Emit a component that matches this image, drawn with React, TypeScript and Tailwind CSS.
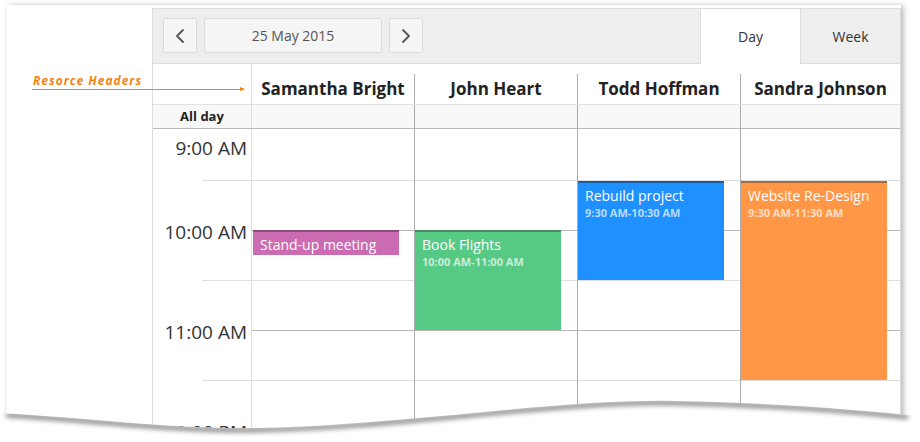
import React from 'react';
import { ChevronLeft, ChevronRight } from 'lucide-react';

const resources = ['Samantha Bright', 'John Heart', 'Todd Hoffman', 'Sandra Johnson'];

type Appt = {
  title: string;
  time?: string;
  box: string;
};

// appointments per resource column, top is measured from 9:00 AM
const appts: Appt[][] = [
  [
    {
      title: 'Stand-up meeting',
      box: 'left-px top-[101px] h-[25px] bg-[#cb6bb2] border-[#8b4f7d]',
    },
  ],
  [
    {
      title: 'Book Flights',
      time: '10:00 AM-11:00 AM',
      box: 'left-0 top-[101px] h-[100px] bg-[#56ca85] border-[#4b8a63]',
    },
  ],
  [
    {
      title: 'Rebuild project',
      time: '9:30 AM-10:30 AM',
      box: 'left-0 top-[52px] h-[99px] bg-[#1e90ff] border-[#1d5c9e]',
    },
  ],
  [
    {
      title: 'Website Re-Design',
      time: '9:30 AM-11:30 AM',
      box: 'left-0 top-[52px] h-[199px] bg-[#ff9747] border-[#a86a3b]',
    },
  ],
];

// half hour cells after the first: bottom line darker on the hour, light on :30
const cellLines = ['border-[#b7b7b7]', 'border-[#dedede]', 'border-[#b7b7b7]', 'border-[#dedede]', 'border-[#b7b7b7]', 'border-[#dedede]'];

function Toolbar() {
  return (
    <div className="flex h-[56px] shrink-0 border-t border-b border-[#dddddd] bg-[#eeeeee]">
      <div className="flex flex-1 items-start gap-[7px] pl-[10px] pt-[9px]">
        <button className="flex h-[35px] w-[34px] items-center justify-center rounded-[2px] border border-[#dcdcdc] bg-[#f5f5f5] text-[#555]">
          <ChevronLeft size={24} strokeWidth={1.8} />
        </button>
        <button className="flex h-[35px] w-[178px] items-center justify-center rounded-[2px] border border-[#dcdcdc] bg-[#f5f5f5] text-[14px] text-[#555]">
          25 May 2015
        </button>
        <button className="flex h-[35px] w-[34px] items-center justify-center rounded-[2px] border border-[#dcdcdc] bg-[#f5f5f5] text-[#555]">
          <ChevronRight size={24} strokeWidth={1.8} />
        </button>
      </div>
      <div className="-mb-px flex w-[100px] items-center justify-center border-l border-[#dddddd] bg-white text-[14px] text-[#333]">
        Day
      </div>
      <div className="flex w-[100px] items-center justify-center border-l border-[#dddddd] text-[14px] text-[#333]">
        Week
      </div>
    </div>
  );
}

function TimeColumn() {
  return (
    <div className="flex w-[99px] shrink-0 flex-col border-r border-[#dedede]">
      <div className="flex h-[51px] shrink-0 justify-end pr-[4px] pt-[6px] text-[19px] leading-[26px] text-[#333]">9:00 AM</div>
      <div className="ml-[49px] h-px shrink-0 bg-[#dedede]" />
      {['10:00 AM', '11:00 AM', '12:00 PM'].map((t) => (
        <React.Fragment key={t}>
          <div className="flex h-[99px] shrink-0 items-center justify-end pr-[4px] pt-[3px] text-[19px] leading-[26px] text-[#333]">{t}</div>
          <div className="ml-[49px] h-px shrink-0 bg-[#dedede]" />
        </React.Fragment>
      ))}
    </div>
  );
}

function ResourceColumn({ index }: { index: number }) {
  const last = index === resources.length - 1;
  return (
    <div className={`relative flex shrink-0 flex-col ${last ? 'w-[159px]' : 'w-[163px] border-r border-[#ababab]'}`}>
      <div className="h-[52px] shrink-0 border-b border-[#dedede]" />
      {cellLines.map((c, i) => (
        <div key={i} className={`h-[50px] shrink-0 border-b ${c}`} />
      ))}
      {appts[index].map((a) => (
        <div key={a.title} className={`absolute w-[146px] border-t-2 px-[7px] pt-[4px] text-white ${a.box}`}>
          <div className="text-[14px] leading-[18px]">{a.title}</div>
          {a.time && <div className="text-[11px] font-bold leading-[16px] text-white/70">{a.time}</div>}
        </div>
      ))}
    </div>
  );
}

function Scheduler() {
  return (
    <div className="mt-[3px] flex w-[749px] shrink-0 flex-col border-l border-r border-[#dddddd]">
      <Toolbar />
      {/* resource headers */}
      <div className="flex h-[41px] shrink-0 border-b border-[#e2e2e2]">
        <div className="w-[99px] border-r border-[#dedede]" />
        {resources.map((r, i) => (
          <div key={r} className={`pt-[10px] ${i === resources.length - 1 ? 'w-[159px]' : 'w-[163px]'}`}>
            <div
              className={`flex h-[30px] items-center justify-center text-[17px] font-bold text-[#222] ${
                i === resources.length - 1 ? '' : 'border-r border-[#ababab]'
              }`}
            >
              {r}
            </div>
          </div>
        ))}
      </div>
      {/* all day row */}
      <div className="flex h-[24px] shrink-0 border-b border-[#b9b9b9] bg-[#f8f8f8]">
        <div className="flex w-[99px] items-center justify-center border-r border-[#dedede] text-[13px] font-bold text-[#222]">
          All day
        </div>
        {resources.map((r, i) => (
          <div key={r} className={i === resources.length - 1 ? 'w-[159px]' : 'w-[163px] border-r border-[#ababab]'} />
        ))}
      </div>
      {/* time grid */}
      <div className="flex shrink-0">
        <TimeColumn />
        {resources.map((r, i) => (
          <ResourceColumn key={r} index={i} />
        ))}
      </div>
    </div>
  );
}

function TornEdge() {
  const edge = 'M6 413 C 90 418, 170 429, 253 428 C 400 426, 560 398, 677 401 C 780 403, 860 410, 908 415';
  const cover = 'M0 413 C 90 418, 170 429, 253 428 C 400 426, 560 398, 677 401 C 780 403, 860 410, 920 416 L920 442 L0 442 Z';
  return (
    <svg className="pointer-events-none absolute left-0 top-0" width={920} height={442} viewBox="0 0 920 442">
      <defs>
        <filter id="soft" x="-5%" y="-50%" width="110%" height="200%">
          <feGaussianBlur stdDeviation="2.6" />
        </filter>
        <clipPath id="below">
          <path d={cover} />
        </clipPath>
      </defs>
      <path d={cover} fill="#ffffff" />
      <g clipPath="url(#below)">
        <path d={edge} fill="none" stroke="rgba(0,0,0,0.55)" strokeWidth={4} transform="translate(0 2)" filter="url(#soft)" />
      </g>
    </svg>
  );
}

export default function App() {
  return (
    <div className="relative h-[442px] w-[920px] overflow-hidden bg-white pl-[7px] pt-[5px] font-['Open_Sans',sans-serif]">
      <div className="flex w-[894px] bg-white shadow-[2px_1px_6px_rgba(0,0,0,0.32)]">
        <div className="w-[145px] shrink-0" />
        <Scheduler />
      </div>

      {/* callout pointing at the resource headers */}
      <div className="pointer-events-none absolute left-[32px] top-[73px] w-[212px]">
        <div className="pl-px text-[12px] font-bold italic leading-[15px] tracking-[1px] text-[#f7830f]">Resorce Headers</div>
        <div className="relative mt-[1px] h-px bg-[#f7830f]">
          <div className="absolute -right-px -top-[2px] h-0 w-0 border-y-[2.5px] border-l-[5px] border-y-transparent border-l-[#f7830f]" />
        </div>
      </div>

      <TornEdge />
    </div>
  );
}
